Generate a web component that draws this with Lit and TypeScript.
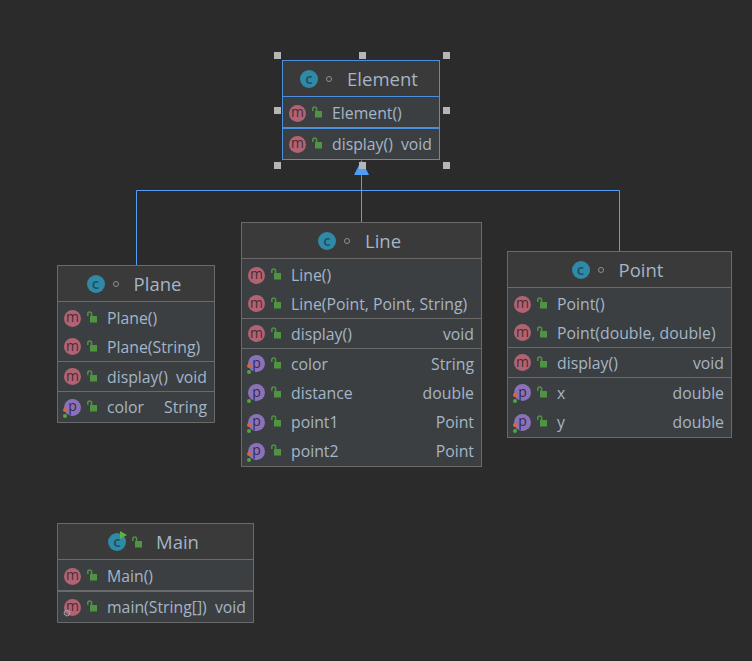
import { LitElement, html, css, svg } from "lit";
import { customElement } from "lit/decorators.js";

type Kind = "m" | "p";
interface Row { kind: Kind; name: string; type?: string; dots?: "both" | "green"; gear?: boolean }
interface Section { h: number; thick?: boolean; rows: Row[] }
interface Node {
  name: string; x: number; y: number; w: number; selected?: boolean; main?: boolean;
  sections: Section[];
}

const nodes: Node[] = [
  { name: "Element", x: 282, y: 60, w: 158, selected: true, sections: [
    { h: 30, rows: [{ kind: "m", name: "Element()" }] },
    { h: 30, thick: true, rows: [{ kind: "m", name: "display()", type: "void" }] },
  ]},
  { name: "Plane", x: 57, y: 265, w: 158, sections: [
    { h: 59, rows: [{ kind: "m", name: "Plane()" }, { kind: "m", name: "Plane(String)" }] },
    { h: 29, rows: [{ kind: "m", name: "display()", type: "void" }] },
    { h: 30, rows: [{ kind: "p", name: "color", type: "String", dots: "both" }] },
  ]},
  { name: "Line", x: 241, y: 222, w: 241, sections: [
    { h: 59, rows: [{ kind: "m", name: "Line()" }, { kind: "m", name: "Line(Point, Point, String)" }] },
    { h: 29, rows: [{ kind: "m", name: "display()", type: "void" }] },
    { h: 117, rows: [
      { kind: "p", name: "color", type: "String", dots: "both" },
      { kind: "p", name: "distance", type: "double", dots: "green" },
      { kind: "p", name: "point1", type: "Point", dots: "both" },
      { kind: "p", name: "point2", type: "Point", dots: "both" },
    ]},
  ]},
  { name: "Point", x: 507, y: 251, w: 225, sections: [
    { h: 59, rows: [{ kind: "m", name: "Point()" }, { kind: "m", name: "Point(double, double)" }] },
    { h: 29, rows: [{ kind: "m", name: "display()", type: "void" }] },
    { h: 59, rows: [
      { kind: "p", name: "x", type: "double", dots: "both" },
      { kind: "p", name: "y", type: "double", dots: "both" },
    ]},
  ]},
  { name: "Main", x: 57, y: 523, w: 197, main: true, sections: [
    { h: 30, rows: [{ kind: "m", name: "Main()" }] },
    { h: 30, thick: true, rows: [{ kind: "m", name: "main(String[])", type: "void", gear: true }] },
  ]},
];

const handles: [number, number][] = [
  [277.5, 55], [362, 55], [446.5, 55],
  [277.5, 110], [446.5, 110],
  [277.5, 165], [362, 165], [446.5, 165],
];

const lock = svg`<svg class="lock" width="10" height="12" viewBox="0 0 10 12">
  <rect x="3" y="5" width="7" height="6.500" fill="#4f9440"/>
  <path d="M.8 5V2.800a1.900 1.900 0 0 1 3.800 0V5" fill="none" stroke="#4f9440" stroke-width="1.500"/>
</svg>`;

@customElement("app-root")
export class AppRoot extends LitElement {
  static styles = css`
    :host { display: block; width: 752px; height: 661px; position: relative; overflow: hidden;
      background: #2b2b2b; font-family: "Open Sans", "Noto Sans", sans-serif; color: #a4b5c6; }
    .edges { position: absolute; inset: 0; }
    .node { position: absolute; box-sizing: border-box; background: #3c3f41; border: 1px solid #6a6a6a;
      display: flex; flex-direction: column; font-size: 15.800px; }
    .node.sel { border-color: #4b8fdf; }
    .head { height: 35px; flex: none; display: flex; align-items: center; justify-content: center;
      background: #3a3a3a; font-size: 18.500px; padding-right: 4px; box-sizing: border-box; }
    .head .c { margin-right: 8px; }
    .head .vis { box-sizing: border-box; width: 6px; height: 6px; border: 1.500px solid #8b9194; border-radius: 50%; margin-right: 15px; }
    .head .lock { margin: 0 14px 0 -2px; }
    .sec { box-sizing: content-box; flex: none; border-top: 1px solid #6a6a6a; display: flex; flex-direction: column; }
    .sec.thick { border-top-width: 2px; }
    .sec.first { padding-top: 2px; }
    .node.sel .sec { border-color: #4b8fdf; }
    .row { flex: 1; min-height: 0; display: flex; align-items: center; padding: 0 7px 0 6px; white-space: nowrap; }
    .ico { position: relative; flex: none; width: 17px; height: 17px; border-radius: 50%; display: flex;
      align-items: center; justify-content: center; font-size: 14px; line-height: 1; color: #4a2c33;
      margin-right: 6px; }
    .ico.m { background: #b26373; }
    .ico.p { background: #8b72b8; color: #352b4a; }
    .ico span { position: relative; top: -1px; }
    .c { width: 18px; height: 18px; border-radius: 50%; background: #2f8aa8; color: #1f4f60; flex: none;
      display: flex; align-items: center; justify-content: center; font-size: 15px; font-weight: 600; position: relative; }
    .c span { position: relative; top: -1px; }
    .play { position: absolute; left: 12px; top: -2px; width: 0; height: 0; border-left: 7px solid #5cb340;
      border-top: 4px solid transparent; border-bottom: 4px solid transparent; }
    .dot { position: absolute; width: 4px; height: 4px; border-radius: 50%; left: -1px; }
    .dot.o { background: #e0662b; top: 9px; }
    .dot.g { background: #4fa83a; top: 15px; }
    .gear { position: absolute; left: -1px; bottom: -1px; }
    .row .lock { flex: none; margin-right: 10px; margin-top: -2px; }
    .label { flex: 1; }
    .type { margin-left: 8px; }
    .handle { position: absolute; width: 7px; height: 7px; background: #b5b5b5; }
  `;

  private row(r: Row) {
    return html`<div class="row">
      <div class="ico ${r.kind}"><span>${r.kind}</span>
        ${r.dots === "both" ? html`<i class="dot o"></i>` : ""}
        ${r.dots ? html`<i class="dot g"></i>` : ""}
        ${r.gear ? svg`<svg class="gear" width="8" height="8" viewBox="0 0 8 8"><circle cx="4" cy="4" r="2.600" fill="none" stroke="#a9a9a9" stroke-width="1.600" stroke-dasharray="1.400 .6"/></svg>` : ""}
      </div>
      ${lock}
      <span class="label">${r.name}</span>
      ${r.type ? html`<span class="type">${r.type}</span>` : ""}
    </div>`;
  }

  private node(n: Node) {
    return html`<div class="node ${n.selected ? "sel" : ""}" style="left:${n.x}px;top:${n.y}px;width:${n.w}px">
      <div class="head">
        <div class="c"><span>c</span>${n.main ? html`<i class="play"></i>` : ""}</div>
        ${n.main ? lock : html`<i class="vis"></i>`}
        <span class="name">${n.name}</span>
      </div>
      ${n.sections.map((s, i) => html`<div class="sec ${s.thick ? "thick" : ""} ${i === 0 ? "first" : ""}" style="height:${i === 0 ? s.h - 2 : s.h}px">${s.rows.map(r => this.row(r))}</div>`)}
    </div>`;
  }

  render() {
    return html`
      <svg class="edges" width="752" height="661" viewBox="0 0 752 661">
        <path d="M136.500 265V190.500H619.500V251M361.500 222V174" fill="none" stroke="#589df6" stroke-width="1"/>
        <path d="M354 175L361.500 160L369 175Z" fill="#4f9df5"/>
      </svg>
      ${nodes.map(n => this.node(n))}
      ${handles.map(([x, y]) => html`<div class="handle" style="left:${x - 3.5}px;top:${y - 3.5}px"></div>`)}
    `;
  }
}
